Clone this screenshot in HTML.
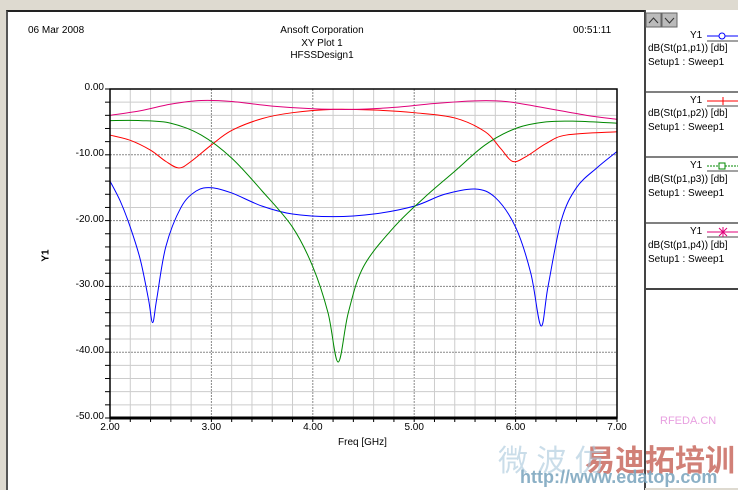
<!DOCTYPE html>
<html><head><meta charset="utf-8"><style>
body{margin:0;width:738px;height:489px;overflow:hidden;background:#dedad0;font-family:"Liberation Sans","Noto Sans CJK SC",sans-serif;position:relative}
.t{position:absolute;font-size:10px;color:#000;white-space:nowrap}
</style></head><body>
<div style="position:absolute;left:6px;top:10px;width:636px;height:478px;background:#fff;border-left:2px solid #555;border-top:2px solid #222;border-right:1px solid #444"></div>
<div style="position:absolute;left:645px;top:10px;width:93px;height:478px;background:#fff;border-left:1px solid #444"></div>
<svg style="position:absolute;left:0;top:0" width="738" height="489" id="s">
<g id="grid"></g>
<g id="curves" fill="none" stroke-width="1"></g>
<rect x="110" y="89" width="507" height="329" fill="none" stroke="#000" stroke-width="1.5"/>
<line x1="110" y1="418" x2="617" y2="418" stroke="#000" stroke-width="3"/>
<rect x="646" y="13" width="15" height="14" fill="#bbb" stroke="#666"/>
<rect x="662" y="13" width="15" height="14" fill="#bbb" stroke="#666"/>
<path d="M649 23 L653.5 18 L658 23" fill="none" stroke="#333"/>
<path d="M665 18 L669.5 23 L674 18" fill="none" stroke="#333"/>
<g stroke="#000"><line x1="646" y1="92" x2="738" y2="92"/><line x1="646" y1="157" x2="738" y2="157"/><line x1="646" y1="223" x2="738" y2="223"/><line x1="646" y1="289" x2="738" y2="289" stroke-width="2" stroke="#444"/></g>
<g><line x1="707" y1="36" x2="738" y2="36" stroke="#00f"/><line x1="707" y1="41" x2="738" y2="41" stroke="#444"/><circle cx="722" cy="36" r="3" fill="#fff" stroke="#00f"/>
<line x1="707" y1="101" x2="738" y2="101" stroke="#f00"/><line x1="707" y1="106" x2="738" y2="106" stroke="#444"/><line x1="723" y1="97" x2="723" y2="105" stroke="#f00"/>
<line x1="707" y1="166" x2="738" y2="166" stroke="#080" stroke-dasharray="2 1"/><line x1="707" y1="171" x2="738" y2="171" stroke="#444"/><rect x="719" y="163" width="6" height="6" fill="#fff" stroke="#080"/>
<line x1="707" y1="232" x2="738" y2="232" stroke="#e0007a"/><line x1="707" y1="237" x2="738" y2="237" stroke="#444"/><path d="M719 228 L727 236 M727 228 L719 236 M723 227 L723 237" stroke="#e0007a"/></g>
</svg>
<div class="t" style="left:28px;top:25px">06 Mar 2008</div>
<div class="t" style="left:262px;top:25px;width:120px;text-align:center;line-height:12.5px">Ansoft Corporation<br>XY Plot 1<br>HFSSDesign1</div>
<div class="t" style="left:573px;top:25px">00:51:11</div>
<div id="yl"></div>
<div class="t" style="left:40px;top:250px;transform:rotate(-90deg);font-weight:bold">Y1</div>
<div class="t" style="left:338px;top:437px">Freq [GHz]</div>
<div class="t" style="left:690px;top:30px">Y1</div><div class="t" style="left:648px;top:43px">dB(St(p1,p1)) [db]</div><div class="t" style="left:648px;top:57px">Setup1 : Sweep1</div>
<div class="t" style="left:690px;top:95px">Y1</div><div class="t" style="left:648px;top:108px">dB(St(p1,p2)) [db]</div><div class="t" style="left:648px;top:122px">Setup1 : Sweep1</div>
<div class="t" style="left:690px;top:160px">Y1</div><div class="t" style="left:648px;top:174px">dB(St(p1,p3)) [db]</div><div class="t" style="left:648px;top:188px">Setup1 : Sweep1</div>
<div class="t" style="left:690px;top:226px">Y1</div><div class="t" style="left:648px;top:240px">dB(St(p1,p4)) [db]</div><div class="t" style="left:648px;top:254px">Setup1 : Sweep1</div>
<div class="t" style="left:660px;top:415px;color:#e8a0e0;font-size:11px">RFEDA.CN</div>
<div class="t" style="left:585px;top:436px;color:#c96a60;font-size:30px;font-weight:bold;opacity:.85">易迪拓培训</div>
<div class="t" style="left:498px;top:436px;color:#a8c8dc;font-size:30px;opacity:.6">微 波 仿</div>
<div class="t" style="left:520px;top:467px;color:#7fa8c0;font-size:18px;font-weight:bold;opacity:.9">http://www.edatop.com</div>
<script>
var X=f=>110+(f-2)*101.4,Y=d=>89-d*6.58;
var g='',i;
for(i=0;i<=25;i++){var x=X(2+i*0.2);g+=`<line x1="${x}" y1="89" x2="${x}" y2="418" stroke="${i%5?'#ccc':'#888'}" ${i%5?'':'stroke-dasharray="2 1"'}/>`;}
for(i=0;i<=25;i++){var y=Y(-i*2);g+=`<line x1="110" y1="${y}" x2="617" y2="${y}" stroke="${i%5?'#ccc':'#888'}" ${i%5?'':'stroke-dasharray="2 1"'}/><line x1="105" y1="${y}" x2="110" y2="${y}" stroke="#000"/>`;}
for(i=0;i<=25;i++){var x=X(2+i*0.2);g+=`<line x1="${x}" y1="418" x2="${x}" y2="422" stroke="#000"/>`;}
document.getElementById('grid').innerHTML=g;
var h='';
for(i=0;i<=5;i++){h+=`<div class="t" style="left:60px;width:44px;text-align:right;top:${Y(-i*10)-7}px">${(-i*10).toFixed(2).replace('-0.00','0.00')}</div>`;
h+=`<div class="t" style="left:${X(2+i)-20}px;width:40px;text-align:center;top:422px">${(2+i).toFixed(2)}</div>`;}
document.getElementById('yl').innerHTML=h;
function cr(p){var s='M'+X(p[0][0])+' '+Y(p[0][1]);for(var k=0;k<p.length-1;k++){var a=p[Math.max(k-1,0)],b=p[k],c=p[k+1],d=p[Math.min(k+2,p.length-1)];
var c1=[X(b[0])+(X(c[0])-X(a[0]))/6,Y(b[1])+(Y(c[1])-Y(a[1]))/6],c2=[X(c[0])-(X(d[0])-X(b[0]))/6,Y(c[1])-(Y(d[1])-Y(b[1]))/6];
s+=`C${c1} ${c2} ${X(c[0])} ${Y(c[1])}`;}return s;}
var C={'#00f':[[2,-14],[2.1,-17],[2.2,-21],[2.3,-26],[2.38,-32],[2.42,-35.5],[2.46,-32],[2.55,-24],[2.7,-18],[2.85,-15.5],[3,-15],[3.2,-15.8],[3.5,-17.8],[3.8,-19],[4.2,-19.4],[4.6,-19],[5,-17.8],[5.3,-16],[5.6,-15.2],[5.8,-16.5],[6,-21],[6.15,-28],[6.25,-36],[6.32,-30],[6.45,-20],[6.6,-15],[6.8,-12],[7,-9.5]],
'#f00':[[2,-7],[2.2,-7.8],[2.4,-9.3],[2.55,-11],[2.68,-12],[2.8,-11],[3,-8.5],[3.2,-6.3],[3.5,-4.5],[3.8,-3.6],[4.2,-3.1],[4.6,-3.2],[5,-3.6],[5.4,-4.4],[5.7,-6.5],[5.85,-9],[5.97,-11],[6.1,-10.3],[6.3,-8.3],[6.5,-7],[7,-6.5]],
'#e0007a':[[2,-4],[2.3,-3.3],[2.6,-2.3],[2.9,-1.75],[3.2,-1.9],[3.6,-2.6],[4,-3],[4.4,-3.1],[4.8,-2.8],[5.2,-2.2],[5.6,-1.8],[5.9,-1.9],[6.3,-2.9],[6.7,-4],[7,-4.6]],
'#080':[[2,-4.8],[2.3,-4.8],[2.6,-5.2],[2.9,-7],[3.2,-10.5],[3.5,-15.5],[3.8,-21],[4,-27],[4.15,-34],[4.25,-41.5],[4.35,-34],[4.5,-27],[4.8,-21],[5.1,-16.5],[5.4,-12.5],[5.7,-8.5],[6,-6],[6.3,-5],[6.6,-4.9],[7,-5.2]]};
var o='';for(var k in C)o+=`<path d="${cr(C[k])}" stroke="${k}"/>`;
document.getElementById('curves').innerHTML=o;
</script>
</body></html>
